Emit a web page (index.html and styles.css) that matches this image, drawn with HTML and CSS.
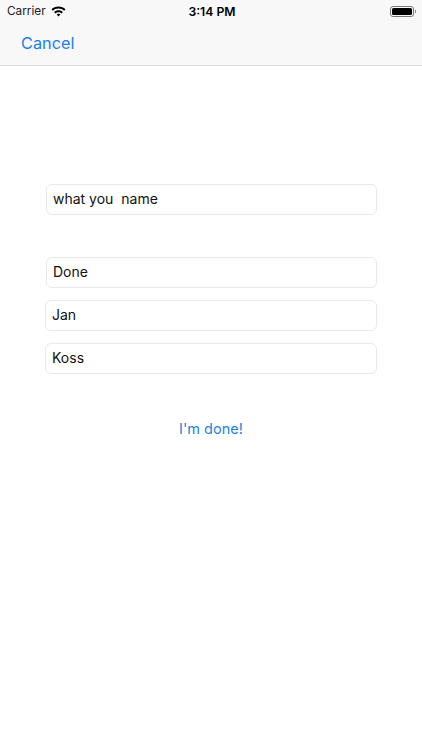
FILE: index.html
```html
<!DOCTYPE html>
<html lang="en">
<head>
    <meta charset="UTF-8">
    <meta name="viewport" content="width=device-width, initial-scale=1.0">
    <title>Name Form</title>
    <link rel="stylesheet" href="styles.css">
</head>
<body>
    <header class="top-bar">
        <div class="status-bar">
            <div class="status-left">
                <span class="carrier">Carrier</span>
                <svg class="wifi" width="15" height="11" viewBox="0 0 15 11">
                    <path d="M7.5 0.6C4.8 0.6 2.4 1.6 0.5 3.3L1.9 4.8C3.4 3.4 5.3 2.6 7.5 2.6S11.6 3.4 13.1 4.8L14.5 3.3C12.6 1.6 10.2 0.6 7.5 0.6Z" fill="#000"/>
                    <path d="M7.5 4.3C5.8 4.3 4.3 4.9 3.1 6L4.5 7.5C5.3 6.8 6.3 6.3 7.5 6.3S9.7 6.8 10.5 7.5L11.9 6C10.7 4.9 9.2 4.3 7.5 4.3Z" fill="#000"/>
                    <path d="M7.5 7.8C6.8 7.8 6.2 8 5.7 8.5L7.5 10.5L9.3 8.5C8.8 8 8.2 7.8 7.5 7.8Z" fill="#000"/>
                </svg>
            </div>
            <div class="clock">3:14 PM</div>
            <div class="battery">
                <div class="battery-body"><div class="battery-level"></div></div>
                <div class="battery-tip"></div>
            </div>
        </div>
        <nav class="nav-bar">
            <a class="cancel">Cancel</a>
        </nav>
    </header>

    <main class="form">
        <div class="field field-inset">what you&nbsp; name</div>
        <div class="field field-inset field-done">Done</div>
        <div class="field field-wide">Jan</div>
        <div class="field field-wide">Koss</div>
        <a class="done-link">I'm done!</a>
    </main>
</body>
</html>
```

FILE: styles.css
```css
body {
    margin: 0;
    height: 750px;
    background: #fff;
    font-family: Inter, "Liberation Sans", sans-serif;
    color: #000;
    overflow: hidden;
}
.top-bar {
    height: 65px;
    background: #f8f8f8;
    border-bottom: 1px solid #dcdcdc;
}
.status-bar {
    height: 22px;
    display: grid;
    grid-template-columns: 1fr auto 1fr;
    align-items: center;
    padding: 0 6px 0 7px;
    font-size: 11.8px;
}
.status-left {
    display: flex;
    align-items: center;
    gap: 5px;
}
.carrier {
    color: #222;
}
.wifi {
    display: block;
}
.clock {
    font-weight: 600;
    font-size: 12.2px;
    margin-left: 1px;
}
.battery {
    justify-self: end;
    display: flex;
    align-items: center;
    gap: 1px;
}
.battery-body {
    box-sizing: border-box;
    width: 24px;
    height: 11px;
    padding: 1px;
    border: 1px solid #777;
    border-radius: 3px;
}
.battery-level {
    height: 100%;
    background: #000;
    border-radius: 1.5px;
}
.battery-tip {
    width: 1px;
    height: 3px;
    background: #888;
}
.nav-bar {
    padding: 11px 21px 0;
}
.cancel {
    font-size: 16.3px;
    line-height: 21px;
    color: #1a7fe8;
}
.form {
    display: flex;
    flex-direction: column;
    padding-top: 118px;
}
.field {
    box-sizing: border-box;
    height: 31px;
    line-height: 27px;
    border: 1px solid #e9e9e9;
    border-radius: 6px;
    font-size: 14px;
    color: #111;
}
.field-inset {
    margin: 0 45px 0 46px;
    padding-left: 6px;
}
.field-done {
    margin-top: 42px;
}
.field-wide {
    margin: 12px 45px 0;
    padding-left: 6px;
}
.done-link {
    margin-top: 45px;
    text-align: center;
    font-size: 14.5px;
    line-height: 20px;
    color: #1a84e0;
}
```
